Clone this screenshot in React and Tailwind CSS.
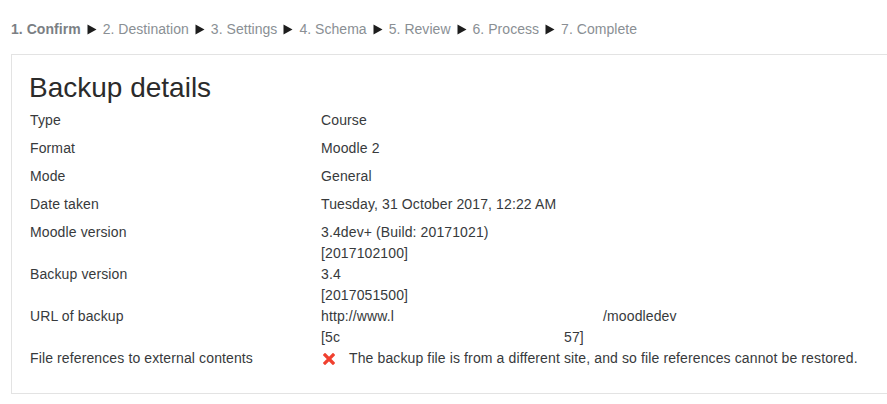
import React from "react";

const steps = [
  "1. Confirm",
  "2. Destination",
  "3. Settings",
  "4. Schema",
  "5. Review",
  "6. Process",
  "7. Complete",
];

const Arrow = () => (
  <svg width="10" height="11" viewBox="0 0 10 11" className="mx-[6px] inline-block">
    <path d="M0.5 0.5 L9.5 5.5 L0.5 10.5 Z" fill="#1d1d1d" />
  </svg>
);

const Cross = () => (
  <svg width="12" height="12" viewBox="0 0 12 12" className="mt-[5px] ml-[2px] mr-[14px] shrink-0">
    <path d="M2 2 L10 10 M10 2 L2 10" stroke="#f0402f" strokeWidth="3.2" strokeLinecap="square" />
  </svg>
);

const Row = ({ label, children }) => (
  <div className="flex min-h-[28px] leading-[21px]">
    <div className="w-[291px] shrink-0">{label}</div>
    <div>{children}</div>
  </div>
);

const App = () => {
  return (
    <div
      className="bg-white w-[887px] h-[404px] overflow-hidden text-[14px] text-[#373a3c] tracking-[0.12px]"
      style={{ fontFamily: '"Liberation Sans", Arial, sans-serif' }}
    >
      <div className="pt-[19px] pl-[11px] flex items-center leading-[20px] text-[#8a8f94] tracking-[0.04px]">
        {steps.map((s, i) => (
          <React.Fragment key={s}>
            <span className={i === 0 ? "font-bold text-[#7b7f84]" : ""}>{s}</span>
            {i < steps.length - 1 && <Arrow />}
          </React.Fragment>
        ))}
      </div>

      <div className="ml-[11px] mt-[15px] border-l border-t border-b border-[#e3e3e3] pl-[18px] pt-[16px] pb-[17px]">
        <h2 className="text-[28px] leading-[34px] text-[#2b2b2b] mb-[5px] -ml-px tracking-normal">Backup details</h2>
        <Row label="Type">Course</Row>
        <Row label="Format">Moodle 2</Row>
        <Row label="Mode">General</Row>
        <Row label="Date taken">Tuesday, 31 October 2017, 12:22 AM</Row>
        <Row label="Moodle version">
          <div>3.4dev+ (Build: 20171021)</div>
          <div>[2017102100]</div>
        </Row>
        <Row label="Backup version">
          <div>3.4</div>
          <div>[2017051500]</div>
        </Row>
        <Row label="URL of backup">
          <div className="flex">
            <span>http://www.l</span>
            <span className="w-[209px]" />
            <span>/moodledev</span>
          </div>
          <div className="flex">
            <span>[5c</span>
            <span className="w-[224px]" />
            <span>57]</span>
          </div>
        </Row>
        <Row label="File references to external contents">
          <div className="flex items-start">
            <Cross />
            <span>The backup file is from a different site, and so file references cannot be restored.</span>
          </div>
        </Row>
      </div>
    </div>
  );
};

export default App;
